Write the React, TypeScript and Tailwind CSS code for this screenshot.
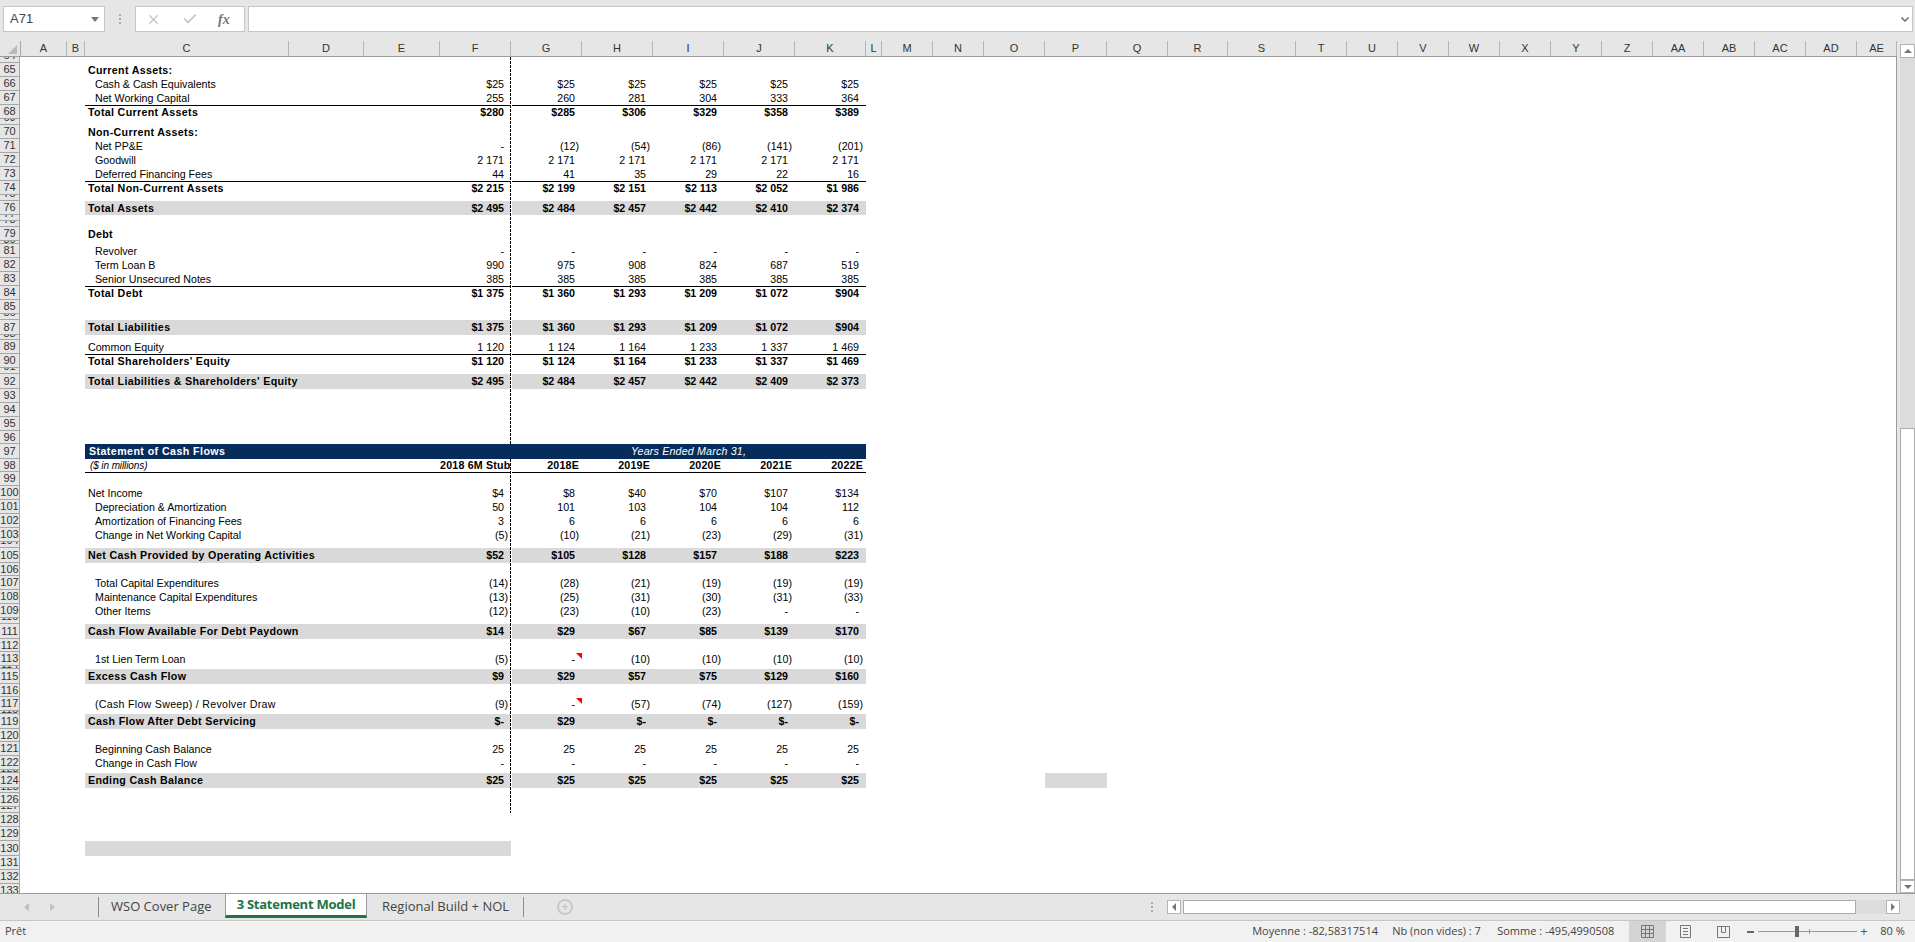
import { Check, X } from "lucide-react";

type Row = {
  n: number;
  h?: string;
  label?: string;
  indent?: boolean;
  bold?: boolean;
  gray?: boolean;
  line?: boolean;
  wide?: boolean;
  vals?: string[];
  note?: boolean;
};

const COLS: [string, string][] = [
  ["A", "w-[46px]"], ["B", "w-[18px]"], ["C", "w-[204px]"], ["D", "w-[75px]"], ["E", "w-[76px]"],
  ["F", "w-[71px]"], ["G", "w-[71px]"], ["H", "w-[71px]"], ["I", "w-[71px]"], ["J", "w-[71px]"], ["K", "w-[71px]"],
  ["L", "w-[16px]"], ["M", "w-[51px]"], ["N", "w-[51px]"], ["O", "w-[61px]"], ["P", "w-[62px]"], ["Q", "w-[61px]"],
  ["R", "w-[60px]"], ["S", "w-[68px]"], ["T", "w-[51px]"], ["U", "w-[51px]"], ["V", "w-[51px]"], ["W", "w-[51px]"],
  ["X", "w-[51px]"], ["Y", "w-[51px]"], ["Z", "w-[51px]"], ["AA", "w-[51px]"], ["AB", "w-[51px]"], ["AC", "w-[51px]"],
  ["AD", "w-[51px]"], ["AE", "w-[40px]"],
];

const same = (v: string) => [v, v, v, v, v, v];

const ROWS: Row[] = [
  { n: 64, h: "h-[6px]" },
  { n: 65, label: "Current Assets:", bold: true },
  { n: 66, label: "Cash & Cash Equivalents", indent: true, vals: same("$25") },
  { n: 67, label: "Net Working Capital", indent: true, vals: ["255", "260", "281", "304", "333", "364"] },
  { n: 68, label: "Total Current Assets", bold: true, line: true, vals: ["$280", "$285", "$306", "$329", "$358", "$389"] },
  { n: 69, h: "h-[6px]" },
  { n: 70, label: "Non-Current Assets:", bold: true },
  { n: 71, label: "Net PP&E", indent: true, vals: ["-", "(12)", "(54)", "(86)", "(141)", "(201)"] },
  { n: 72, label: "Goodwill", indent: true, vals: same("2 171") },
  { n: 73, label: "Deferred Financing Fees", indent: true, vals: ["44", "41", "35", "29", "22", "16"] },
  { n: 74, label: "Total Non-Current Assets", bold: true, line: true, vals: ["$2 215", "$2 199", "$2 151", "$2 113", "$2 052", "$1 986"] },
  { n: 75, h: "h-[6px]" },
  { n: 76, label: "Total Assets", bold: true, gray: true, vals: ["$2 495", "$2 484", "$2 457", "$2 442", "$2 410", "$2 374"] },
  { n: 77, h: "h-[6px]" },
  { n: 78, h: "h-[6px]" },
  { n: 79, label: "Debt", bold: true },
  { n: 80, h: "h-[3px]" },
  { n: 81, label: "Revolver", indent: true, vals: same("-") },
  { n: 82, label: "Term Loan B", indent: true, vals: ["990", "975", "908", "824", "687", "519"] },
  { n: 83, label: "Senior Unsecured Notes", indent: true, vals: same("385") },
  { n: 84, label: "Total Debt", bold: true, line: true, vals: ["$1 375", "$1 360", "$1 293", "$1 209", "$1 072", "$904"] },
  { n: 85 },
  { n: 86, h: "h-[6px]" },
  { n: 87, h: "h-[15px]", label: "Total Liabilities", bold: true, gray: true, vals: ["$1 375", "$1 360", "$1 293", "$1 209", "$1 072", "$904"] },
  { n: 88, h: "h-[5px]" },
  { n: 89, label: "Common Equity", vals: ["1 120", "1 124", "1 164", "1 233", "1 337", "1 469"] },
  { n: 90, label: "Total Shareholders' Equity", bold: true, line: true, vals: ["$1 120", "$1 124", "$1 164", "$1 233", "$1 337", "$1 469"] },
  { n: 91, h: "h-[6px]" },
  { n: 92, h: "h-[15px]", label: "Total Liabilities & Shareholders' Equity", bold: true, gray: true, vals: ["$2 495", "$2 484", "$2 457", "$2 442", "$2 409", "$2 373"] },
  { n: 93 },
  { n: 94 },
  { n: 95 },
  { n: 96, h: "h-[13px]" },
];

const ROWS_CF: Row[] = [
  { n: 99, line: true },
  { n: 100, label: "Net Income", vals: ["$4", "$8", "$40", "$70", "$107", "$134"] },
  { n: 101, label: "Depreciation & Amortization", indent: true, vals: ["50", "101", "103", "104", "104", "112"] },
  { n: 102, label: "Amortization of Financing Fees", indent: true, vals: ["3", "6", "6", "6", "6", "6"] },
  { n: 103, label: "Change in Net Working Capital", indent: true, vals: ["(5)", "(10)", "(21)", "(23)", "(29)", "(31)"] },
  { n: 104, h: "h-[6px]" },
  { n: 105, h: "h-[15px]", label: "Net Cash Provided by Operating Activities", bold: true, gray: true, vals: ["$52", "$105", "$128", "$157", "$188", "$223"] },
  { n: 106, h: "h-[13px]" },
  { n: 107, label: "Total Capital Expenditures", indent: true, vals: ["(14)", "(28)", "(21)", "(19)", "(19)", "(19)"] },
  { n: 108, label: "Maintenance Capital Expenditures", indent: true, vals: ["(13)", "(25)", "(31)", "(30)", "(31)", "(33)"] },
  { n: 109, label: "Other Items", indent: true, vals: ["(12)", "(23)", "(10)", "(23)", "-", "-"] },
  { n: 110, h: "h-[6px]" },
  { n: 111, h: "h-[15px]", label: "Cash Flow Available For Debt Paydown", bold: true, gray: true, vals: ["$14", "$29", "$67", "$85", "$139", "$170"] },
  { n: 112, h: "h-[13px]" },
  { n: 113, label: "1st Lien Term Loan", indent: true, note: true, vals: ["(5)", "-", "(10)", "(10)", "(10)", "(10)"] },
  { n: 114, h: "h-[3px]" },
  { n: 115, h: "h-[15px]", label: "Excess Cash Flow", bold: true, gray: true, vals: ["$9", "$29", "$57", "$75", "$129", "$160"] },
  { n: 116, h: "h-[13px]" },
  { n: 117, label: "(Cash Flow Sweep) / Revolver Draw", indent: true, wide: true, note: true, vals: ["(9)", "-", "(57)", "(74)", "(127)", "(159)"] },
  { n: 118, h: "h-[3px]" },
  { n: 119, h: "h-[15px]", label: "Cash Flow After Debt Servicing", bold: true, gray: true, vals: ["$-", "$29", "$-", "$-", "$-", "$-"] },
  { n: 120, h: "h-[13px]" },
  { n: 121, label: "Beginning Cash Balance", indent: true, vals: same("25") },
  { n: 122, label: "Change in Cash Flow", indent: true, vals: same("-") },
  { n: 123, h: "h-[3px]" },
  { n: 124, h: "h-[15px]", label: "Ending Cash Balance", bold: true, gray: true, vals: same("$25") },
  { n: 125, h: "h-[5px]" },
  { n: 126 },
  { n: 127, h: "h-[6px]" },
  { n: 128 },
  { n: 129 },
];

const THIN = ["h-[3px]", "h-[5px]", "h-[6px]"];

function RowHead({ n, thin }: { n: number; thin?: boolean }) {
  return (
    <div className={`flex h-full w-[20px] shrink-0 justify-center overflow-hidden border-r border-b border-[#a6a6a6] bg-[#e6e6e6] text-[11px] leading-[13px] text-[#333] ${thin ? "items-start" : "items-center"}`}>
      <span className={thin ? "-mt-[8px]" : ""}>{n}</span>
    </div>
  );
}

function Value({ v, note, index }: { v: string; note?: boolean; index: number }) {
  const neg = v.startsWith("(");
  return (
    <div className={`relative w-[71px] text-right leading-[13px] ${neg ? "pr-[3px]" : "pr-[7px]"}`}>
      {v}
      {note && index === 1 && <div className="absolute top-0 right-0 size-0 border-t-[6px] border-l-[6px] border-t-[#ff0000] border-l-transparent" />}
    </div>
  );
}

function SheetRow({ r }: { r: Row }) {
  return (
    <div className={`flex items-stretch ${r.h ?? "h-[14px]"}`}>
      <RowHead n={r.n} thin={r.h !== undefined && THIN.includes(r.h)} />
      <div className="w-[65px] shrink-0" />
      <div
        className={`flex w-[781px] shrink-0 items-center overflow-hidden text-[10.67px] text-black
          ${r.gray ? "bg-[#d9d9d9]" : ""} ${r.line ? "border-t border-black" : ""} ${r.bold ? "font-bold" : ""}`}
      >
        <div className={`w-[355px] whitespace-nowrap leading-[13px] ${r.indent ? "pl-[10px]" : "pl-[3px]"} ${r.bold ? "tracking-[0.33px]" : ""} ${r.wide ? "tracking-[0.27px]" : ""}`}>{r.label}</div>
        {r.vals?.map((v, i) => <Value key={i} v={v} note={r.note} index={i} />)}
      </div>
      {r.n === 124 && <div className="ml-[179px] w-[62px] bg-[#d9d9d9]" />}
    </div>
  );
}

const HEADS = ["2018 6M Stub", "2018E", "2019E", "2020E", "2021E", "2022E"];

function CashFlowHeader() {
  return (
    <>
      <div className="flex h-[15px]">
        <RowHead n={97} />
        <div className="w-[65px] shrink-0" />
        <div className="flex w-[781px] items-center bg-[#062c5c] text-[10.67px] leading-[13px] text-white">
          <div className="w-[355px] pl-[4px] font-bold tracking-[0.42px]">Statement of Cash Flows</div>
          <div className="w-[71px]" />
          <div className="w-[355px] text-center tracking-[0.18px] italic">Years Ended March 31,</div>
        </div>
      </div>
      <div className="flex h-[13px]">
        <RowHead n={98} />
        <div className="w-[65px] shrink-0" />
        <div className="flex w-[781px] items-center text-[10.67px] leading-[13px] text-black">
          <div className="w-[355px] pl-[5px] text-[10px] tracking-[-0.1px] italic">($ in millions)</div>
          {HEADS.map((h) => (
            <div key={h} className="w-[71px] pr-[3px] text-right font-bold tracking-[0.2px] whitespace-nowrap">{h}</div>
          ))}
        </div>
      </div>
    </>
  );
}

function FormulaBar() {
  return (
    <div className="flex h-[41px] shrink-0 items-start gap-0 pt-[6px]">
      <div className="ml-[3px] flex h-[26px] w-[102px] items-center justify-between border border-[#c6c6c6] bg-white pr-[5px] pl-[6px] text-[13px] text-[#444]">
        A71
        <svg viewBox="0 0 8 5" className="w-[8px] fill-[#777]"><path d="M0 0h8L4 5z" /></svg>
      </div>
      <div className="flex h-[26px] w-[30px] flex-col items-center justify-center gap-[2px]">
        <div className="size-[2px] bg-[#aaa]" />
        <div className="size-[2px] bg-[#aaa]" />
        <div className="size-[2px] bg-[#aaa]" />
      </div>
      <div className="flex h-[26px] w-[110px] items-center border border-[#c6c6c6] bg-white text-[#c4c4c4]">
        <X size={15} strokeWidth={2} className="ml-[10px]" />
        <Check size={16} strokeWidth={2.5} className="ml-[21px] text-[#c4c4c4]" />
        <span className="ml-[20px] font-['Liberation_Serif',serif] text-[14px] font-bold text-[#777] italic">fx</span>
      </div>
      <div className="mr-[2px] ml-[3px] flex h-[26px] flex-1 items-center justify-end border border-[#c6c6c6] bg-white pr-[3px]">
        <svg viewBox="0 0 8 5" className="w-[8px] fill-none stroke-[#777] stroke-[1.6]"><path d="M0.5 0.5L4 4l3.5-3.5" /></svg>
      </div>
    </div>
  );
}

function ColumnHeader() {
  return (
    <div className="flex h-[16px] shrink-0 border-b border-[#9b9b9b] text-[11px] leading-[13px] text-[#333]">
      <div className="flex w-[21px] shrink-0 items-end justify-end border-r border-[#a6a6a6] pr-[3px] pb-[2px]">
        <svg viewBox="0 0 8 8" className="w-[9px] fill-[#b9b9b9]"><path d="M8 0v8H0z" /></svg>
      </div>
      {COLS.map(([name, w]) => (
        <div key={name} className={`flex shrink-0 items-center justify-center border-r border-[#b4b4b4] ${w}`}>{name}</div>
      ))}
    </div>
  );
}

function Sheet() {
  return (
    <div className="relative h-[836px] overflow-hidden border-r border-[#9b9b9b] bg-white">
      {ROWS.map((r) => <SheetRow key={r.n} r={r} />)}
      <CashFlowHeader />
      {ROWS_CF.map((r) => <SheetRow key={r.n} r={r} />)}
      <div className="flex h-[15px]">
        <RowHead n={130} />
        <div className="w-[65px] shrink-0" />
        <div className="w-[426px] bg-[#d9d9d9]" />
      </div>
      <SheetRow r={{ n: 131 }} />
      <SheetRow r={{ n: 132 }} />
      <SheetRow r={{ n: 133 }} />
      {/* page break line, it stops on the navy title row */}
      <div className="absolute top-0 left-[510px] h-[387px] w-[2px] border-r border-white bg-[repeating-linear-gradient(to_bottom,#000_0,#000_3px,#fff_3px,#fff_4px)] bg-clip-padding" />
      <div className="absolute top-[402px] left-[510px] h-[354px] w-[2px] border-r border-white bg-[repeating-linear-gradient(to_bottom,#000_0,#000_3px,#fff_3px,#fff_4px)] bg-clip-padding" />
    </div>
  );
}

function ScrollButton({ dir, className }: { dir: "up" | "down" | "left" | "right"; className: string }) {
  const d = { up: "M0 6L4 2l4 4z", down: "M0 2l4 4 4-4z", left: "M6 0L2 4l4 4z", right: "M2 0l4 4-4 4z" }[dir];
  return (
    <div className={`flex shrink-0 items-center justify-center border border-[#b4b4b4] bg-white ${className}`}>
      <svg viewBox="0 0 8 8" className="w-[8px] fill-[#777]"><path d={d} /></svg>
    </div>
  );
}

function VerticalScroll() {
  return (
    <div className="flex w-[18px] shrink-0 flex-col items-end pt-[3px]">
      <ScrollButton dir="up" className="h-[14px] w-[15px]" />
      <div className="flex h-[822px] w-[15px] flex-col bg-[#dcdcdc]">
        <div className="h-[370px]" />
        <div className="h-[452px] w-[15px] border border-[#ababab] bg-white" />
      </div>
      <ScrollButton dir="down" className="h-[13px] w-[15px]" />
    </div>
  );
}

function TabBar() {
  return (
    <div className="flex h-[28px] shrink-0 border-t border-b border-t-[#9b9b9b] border-b-[#c6c6c6] bg-[#e6e6e6]">
      <div className="flex w-[98px] items-center gap-[21px] pl-[24px]">
        <svg viewBox="0 0 6 10" className="w-[5px] fill-[#c0c0c0]"><path d="M6 0v10L0 5z" /></svg>
        <svg viewBox="0 0 6 10" className="w-[5px] fill-[#c0c0c0]"><path d="M0 0v10l6-5z" /></svg>
      </div>
      <div className="flex font-['Open_Sans',sans-serif] text-[13px] text-[#444]">
        <div className="my-[3px] flex w-[127px] items-center border-l border-[#8c8c8c] pl-[12px]">WSO Cover Page</div>
        <div className="flex h-[24px] w-[142px] items-center justify-center border-x border-[#9b9b9b] border-b-[3px] border-b-[#217346] bg-white font-bold tracking-[-0.25px] text-[#217346]">3 Statement Model</div>
        <div className="my-[3px] flex w-[157px] items-center border-r border-[#8c8c8c] pl-[15px]">Regional Build + NOL</div>
      </div>
      <div className="ml-[33px] flex items-center">
        <div className="flex size-[16px] items-center justify-center rounded-full border-2 border-[#c9c9c9] text-[12px] leading-none font-bold text-[#c9c9c9]">+</div>
      </div>
      <div className="ml-[578px] flex items-center gap-[14px]">
        <div className="flex flex-col gap-[2px]">
          <div className="size-[2px] bg-[#aaa]" />
          <div className="size-[2px] bg-[#aaa]" />
          <div className="size-[2px] bg-[#aaa]" />
        </div>
        <ScrollButton dir="left" className="h-[14px] w-[14px]" />
      </div>
      <div className="ml-[2px] flex items-center">
        <div className="h-[14px] w-[673px] border border-[#ababab] bg-white" />
        <div className="h-[14px] w-[30px] bg-[#dcdcdc]" />
        <ScrollButton dir="right" className="h-[14px] w-[14px]" />
      </div>
    </div>
  );
}

function StatusBar() {
  return (
    <div className="flex h-[21px] shrink-0 items-center bg-[#f1f1f1] font-['Open_Sans',sans-serif] text-[11px] text-[#444]">
      <span className="ml-[5px]">Prêt</span>
      <span className="ml-[1226px] w-[140px] whitespace-nowrap">Moyenne : -82,58317514</span>
      <span className="w-[105px] whitespace-nowrap">Nb (non vides) : 7</span>
      <span className="w-[132px] whitespace-nowrap">Somme : -495,4990508</span>
      <div className="flex h-full w-[37px] items-center justify-center bg-[#d4d4d4]">
        <svg viewBox="0 0 13 13" className="w-[13px] fill-none stroke-[#777]"><path d="M.5.5h12v12H.5zM4.5.5v12M8.5.5v12M.5 4.5h12M.5 8.5h12" /></svg>
      </div>
      <div className="flex w-[38px] justify-center">
        <svg viewBox="0 0 11 13" className="w-[11px] fill-none stroke-[#777]"><path d="M.5.5h10v12H.5zM3 3.5h5M3 6.5h5M3 9.5h5" /></svg>
      </div>
      <div className="flex w-[42px] justify-center pr-[3px]">
        <svg viewBox="0 0 13 12" className="w-[13px] fill-none stroke-[#777]"><path d="M.5.5h12v11H.5zM4.5.5v6h4v-6" /></svg>
      </div>
      <div className="relative flex w-[124px] items-center">
        <div className="ml-[1px] h-[2px] w-[7px] bg-[#666]" />
        <div className="ml-[4px] h-px w-[99px] bg-[#999]" />
        <div className="absolute left-[49px] h-[11px] w-[4px] bg-[#666]" />
        <div className="absolute left-[63px] h-[5px] w-px bg-[#999]" />
        <div className="ml-[3px] text-[13px] leading-none text-[#555]">+</div>
      </div>
      <span className="ml-[10px] whitespace-nowrap">80 %</span>
    </div>
  );
}

export default function App() {
  return (
    <div className="flex h-[942px] w-[1915px] flex-col overflow-hidden bg-[#e6e6e6] font-['Liberation_Sans',Arial,sans-serif]">
      <FormulaBar />
      <div className="flex h-[852px] shrink-0">
        <div className="w-[1897px] shrink-0">
          <ColumnHeader />
          <Sheet />
        </div>
        <VerticalScroll />
      </div>
      <TabBar />
      <StatusBar />
    </div>
  );
}
